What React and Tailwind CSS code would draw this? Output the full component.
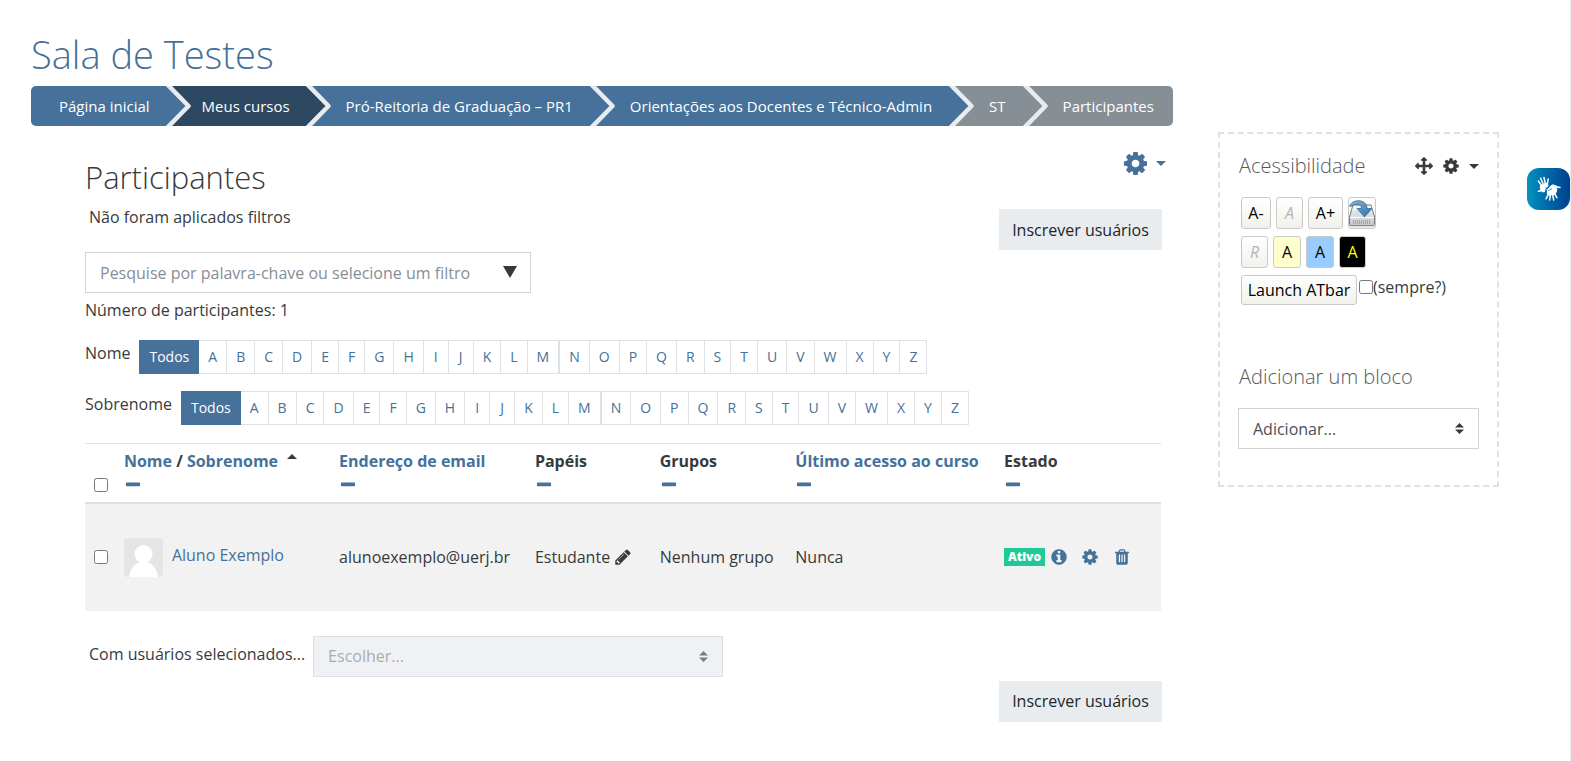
import clsx from 'clsx';

const PATHS = {
  cog: 'M1152 896q0-106-75-181t-181-75-181 75-75 181 75 181 181 75 181-75 75-181zm512-109v222q0 12-8 23t-20 13l-185 28q-19 54-39 91 35 50 107 138 10 12 10 25t-9 23q-27 37-99 108t-94 71q-12 0-26-9l-138-108q-44 23-91 38-16 136-29 186-7 28-36 28h-222q-14 0-24.5-8.5t-11.5-21.5l-28-184q-49-16-90-37l-141 107q-10 9-25 9-14 0-25-11-126-114-165-168-7-10-7-23 0-12 8-23 15-21 51-66.5t54-70.5q-27-50-41-99l-183-27q-13-2-21-12.5t-8-23.5v-222q0-12 8-23t19-13l186-28q14-46 39-92-40-57-107-138-10-12-10-24 0-10 9-23 26-36 98.5-107.5t94.5-71.5q13 0 26 10l138 107q44-23 91-38 16-136 29-186 7-28 36-28h222q14 0 24.5 8.5t11.5 21.5l28 184q49 16 90 37l142-107q9-9 24-9 13 0 25 10 129 119 165 170 7 8 7 22 0 12-8 23-15 21-51 66.5t-54 70.5q26 50 41 98l183 28q13 2 21 12.5t8 23.5z',
  move: 'M1792 896q0 26-19 45l-256 256q-19 19-45 19t-45-19-19-45v-128h-384v384h128q26 0 45 19t19 45-19 45l-256 256q-19 19-45 19t-45-19l-256-256q-19-19-19-45t19-45 45-19h128v-384h-384v128q0 26-19 45t-45 19-45-19l-256-256q-19-19-19-45t19-45l256-256q19-19 45-19t45 19 19 45v128h384v-384h-128q-26 0-45-19t-19-45 19-45l256-256q19-19 45-19t45 19l256 256q19 19 19 45t-19 45-45 19h-128v384h384v-128q0-26 19-45t45-19 45 19l256 256q19 19 19 45z',
  info: 'M1152 1376v-160q0-14-9-23t-23-9h-96v-512q0-14-9-23t-23-9h-320q-14 0-23 9t-9 23v160q0 14 9 23t23 9h96v320h-96q-14 0-23 9t-9 23v160q0 14 9 23t23 9h448q14 0 23-9t9-23zm-128-896v-160q0-14-9-23t-23-9h-192q-14 0-23 9t-9 23v160q0 14 9 23t23 9h192q14 0 23-9t9-23zm640 416q0 209-103 385.5t-279.5 279.5-385.5 103-385.5-103-279.5-279.5-103-385.5 103-385.5 279.5-279.5 385.5-103 385.5 103 279.5 279.5 103 385.5z',
  pencil: 'M491 1536l91-91-235-235-91 91v107h128v128h107zm523-928q0-22-22-22-10 0-17 7l-542 542q-7 7-7 17 0 22 22 22 10 0 17-7l542-542q7-7 7-17zm-54-192l416 416-832 832h-416v-416zm683 96q0 53-37 90l-166 166-416-416 166-165q36-38 90-38 53 0 91 38l235 234q37 39 37 91z',
  trash: 'M704 1376v-704q0-14-9-23t-23-9h-64q-14 0-23 9t-9 23v704q0 14 9 23t23 9h64q14 0 23-9t9-23zm256 0v-704q0-14-9-23t-23-9h-64q-14 0-23 9t-9 23v704q0 14 9 23t23 9h64q14 0 23-9t9-23zm256 0v-704q0-14-9-23t-23-9h-64q-14 0-23 9t-9 23v704q0 14 9 23t23 9h64q14 0 23-9t9-23zm-544-992h448l-48-117q-7-9-17-11h-317q-10 2-17 11zm928 32v64q0 14-9 23t-23 9h-96v948q0 83-47 143.5t-113 60.5h-832q-66 0-113-58.5t-47-141.5v-952h-96q-14 0-23-9t-9-23v-64q0-14 9-23t23-9h309l70-167q15-37 54-63t79-26h320q40 0 79 26t54 63l70 167h309q14 0 23 9t9 23z',
  minus: 'M1600 736v192q0 40-28 68t-68 28h-1216q-40 0-68-28t-28-68v-192q0-40 28-68t68-28h1216q40 0 68 28t28 68z',
};

const CRUMBS = [
  { label: 'Página inicial', bg: 'bg-[#45719a]', fill: '#45719a', pad: 'pl-7 pr-4' },
  { label: 'Meus cursos', bg: 'bg-[#2d4861]', fill: '#2d4861', pad: 'pl-[11px] pr-4' },
  { label: 'Pró-Reitoria de Graduação – PR1', bg: 'bg-[#45719a]', fill: '#45719a', pad: 'pl-[15px] pr-[17px]' },
  { label: 'Orientações aos Docentes e Técnico-Admin', bg: 'bg-[#45719a]', fill: '#45719a', pad: 'pl-[15px] pr-[17px]' },
  { label: 'ST', bg: 'bg-[#868e96]', fill: '#868e96', pad: 'pl-[15px] pr-[17px]' },
  { label: 'Participantes', bg: 'bg-[#868e96]', fill: '#868e96', pad: 'pl-[15px] pr-4' },
];

const LETTER_GROUPS = ['ABCDEFGHIJKLM', 'NOPQRSTUVWXYZ'];

const COLUMNS = [
  { label: 'Endereço de email', link: true },
  { label: 'Papéis' },
  { label: 'Grupos' },
  { label: 'Último acesso ao curso', link: true },
  { label: 'Estado' },
];

function Icon({ name, className }) {
  return (
    <svg viewBox="0 0 1792 1792" fill="currentColor" className={clsx('shrink-0', className)} aria-hidden="true">
      <path d={PATHS[name]} />
    </svg>
  );
}

function Caret({ className }) {
  return (
    <svg viewBox="0 0 10 5" fill="currentColor" className={clsx('h-[5px] w-[10px] shrink-0', className)} aria-hidden="true">
      <path d="M0 0h10L5 5z" />
    </svg>
  );
}

function Breadcrumb() {
  return (
    <nav aria-label="Navegação">
      <ol className="flex h-10 overflow-hidden rounded-[5px] text-[15px] text-white">
        {CRUMBS.map((crumb, i) => (
          <li key={crumb.label} className={clsx('flex', i === CRUMBS.length - 1 && 'flex-1')}>
            <a href="#" className={clsx('flex flex-1 items-center whitespace-nowrap', crumb.bg, crumb.pad)}>
              {crumb.label}
            </a>
            {i < CRUMBS.length - 1 && (
              <svg viewBox="0 0 25 40" className="h-10 w-[25px] shrink-0" aria-hidden="true">
                <rect width="25" height="40" fill={CRUMBS[i + 1].fill} />
                <path d="M0 0h2l20 20L2 40H0z" fill={crumb.fill} />
                <path d="M1 -2L22.500 20L1 42" fill="none" stroke="#e9ecef" strokeWidth="4.500" strokeLinejoin="round" />
              </svg>
            )}
          </li>
        ))}
      </ol>
    </nav>
  );
}

function InitialsBar({ label }) {
  const cell = 'flex h-full min-w-[25px] items-center justify-center border-y border-r border-[#dee2e6] px-[9px] text-[#45719a]';
  return (
    <div className="flex gap-[9px]">
      <span className="leading-[26px]">{label}</span>
      <nav aria-label={label} className="flex h-[34px] text-sm">
        <a href="#" className="flex items-center bg-[#45719a] px-[10px] font-medium text-white">Todos</a>
        {LETTER_GROUPS.map((group, i) => (
          <ul key={group} className={clsx('flex', i > 0 && 'border-l border-[#dee2e6]')}>
            {group.split('').map((letter) => (
              <li key={letter}>
                <a href="#" className={cell}>{letter}</a>
              </li>
            ))}
          </ul>
        ))}
      </nav>
    </div>
  );
}

function SelectBox({ label, id, disabled, className }) {
  return (
    <div className={clsx('relative', className)}>
      <select
        id={id}
        aria-label={label}
        disabled={disabled}
        className={clsx(
          'h-[41px] w-full appearance-none border px-[14px]',
          disabled ? 'border-[#dcdfe5] bg-[#f0f1f4] text-[#a9adb3] opacity-100' : 'border-[#ced4da] bg-white text-[#495057]'
        )}
      >
        <option>{label}</option>
      </select>
      <svg
        viewBox="0 0 9 11"
        className={clsx('pointer-events-none absolute right-[15px] top-[15px] h-[11px] w-[9px]', disabled ? 'text-[#7b7d80]' : 'text-[#373a3c]')}
        fill="currentColor"
        aria-hidden="true"
      >
        <path d="M0 4.500L4.500 0L9 4.500zM0 6.500h9L4.500 11z" />
      </svg>
    </div>
  );
}

function EnrolButton() {
  return (
    <button type="button" className="mr-1 h-[41px] w-[163px] whitespace-nowrap bg-[#e9ecef] text-[#212529]">
      Inscrever usuários
    </button>
  );
}

function CollapseColumn() {
  return (
    <button type="button" aria-label="Ocultar coluna" className="block h-6 text-[#45719a]">
      <Icon name="minus" className="h-[18px] w-[18px]" />
    </button>
  );
}

function Avatar() {
  return (
    <svg viewBox="0 0 39 39" className="h-[39px] w-[39px] shrink-0 rounded" aria-hidden="true">
      <rect width="39" height="39" fill="#e5e5e5" />
      <circle cx="19.500" cy="16" r="9" fill="#fff" />
      <path d="M5 39c1-9 7-15.500 14.500-15.500S33 30 34 39z" fill="#fff" />
    </svg>
  );
}

function ParticipantsTable() {
  return (
    <table className="w-[calc(100%-5px)] table-fixed border-collapse text-left">
      <colgroup>
        <col className="w-[2.500%]" />
        <col className="w-[20%]" />
        <col className="w-[18.200%]" />
        <col className="w-[11.600%]" />
        <col className="w-[12.600%]" />
        <col className="w-[19.400%]" />
        <col />
      </colgroup>
      <thead>
        <tr className="h-[59px] border-b-2 border-t border-b-[#dee2e6] border-t-[#dee2e6] align-top">
          <th className="pl-[9px] pt-[34px]">
            <input type="checkbox" aria-label="Selecionar todos" className="block h-[14px] w-[14px]" />
          </th>
          <th className="whitespace-nowrap pl-3 pt-[5px] font-bold leading-6">
            <a href="#" className="text-[#45719a]">Nome</a> / <a href="#" className="text-[#45719a]">Sobrenome</a>
            <Caret className="mb-3 ml-[9px] inline rotate-180" />
            <CollapseColumn />
          </th>
          {COLUMNS.map((column) => (
            <th key={column.label} className="whitespace-nowrap pl-3 pt-[5px] font-bold leading-6">
              {column.link ? <a href="#" className="text-[#45719a]">{column.label}</a> : column.label}
              <CollapseColumn />
            </th>
          ))}
        </tr>
      </thead>
      <tbody>
        <tr className="h-[108px] whitespace-nowrap bg-[#f2f2f2]">
          <td className="pl-[9px]">
            <input type="checkbox" aria-label="Selecionar Aluno Exemplo" className="block h-[14px] w-[14px]" />
          </td>
          <td className="pl-3">
            <a href="#" className="flex items-center gap-[9px] text-[#45719a]">
              <Avatar />
              <span className="pb-1">Aluno Exemplo</span>
            </a>
          </td>
          <td className="pl-3">alunoexemplo@uerj.br</td>
          <td className="pl-3">
            <span className="flex items-center gap-1">
              Estudante
              <button type="button" aria-label="Editar papéis">
                <Icon name="pencil" className="h-[18px] w-[18px]" />
              </button>
            </span>
          </td>
          <td className="pl-3">Nenhum grupo</td>
          <td className="pl-3">Nunca</td>
          <td className="pl-3">
            <span className="flex items-center text-[#45719a]">
              <span className="mr-[5px] flex h-[18px] w-[41px] items-center justify-center bg-[#20c997] text-xs font-extrabold text-white">Ativo</span>
              <a href="#" aria-label="Informações" className="mr-[13px]"><Icon name="info" className="h-[18px] w-[18px]" /></a>
              <a href="#" aria-label="Editar inscrição" className="mr-[14px]"><Icon name="cog" className="h-[18px] w-[18px]" /></a>
              <a href="#" aria-label="Cancelar inscrição"><Icon name="trash" className="h-[18px] w-[18px]" /></a>
            </span>
          </td>
        </tr>
      </tbody>
    </table>
  );
}

function SaveIcon() {
  return (
    <svg viewBox="0 0 28 28" className="h-7 w-7 shrink-0" aria-hidden="true">
      <defs>
        <linearGradient id="drive" x1="0" y1="0" x2="0" y2="1">
          <stop offset="0" stopColor="#fafafa" />
          <stop offset="1" stopColor="#c4c6c8" />
        </linearGradient>
        <linearGradient id="arrow" x1="0" y1="0" x2="1" y2="1">
          <stop offset="0" stopColor="#8cb6d6" />
          <stop offset="1" stopColor="#2f6ea6" />
        </linearGradient>
      </defs>
      <path d="M5 6h18l3.500 12v7.500a1.200 1.200 0 0 1-1.200 1.200H2.700a1.200 1.200 0 0 1-1.200-1.200V18z" fill="url(#drive)" stroke="#777a7d" />
      <path d="M2 18.500h24" stroke="#fff" />
      <ellipse cx="14" cy="15" rx="9" ry="3.500" fill="#dcddde" />
      <path d="M5.500 21v4M7.500 21v4M9.500 21v4M11.500 21v4M13.500 21v4M15.500 21v4M17.500 21v4M19.500 21v4M21.500 21v4" stroke="#a2a5a8" />
      <path d="M1.500 7C3.500 2.500 8.500 1 13 2c4 1 6 4 6 7.500h5L16.500 18 9 9.500h4.500C13.500 7 12 5.500 9 5.500c-2.500 0-4.500.5-6 2z" fill="url(#arrow)" stroke="#356f9e" strokeWidth=".8" />
    </svg>
  );
}

function ToolButton({ className, children, ...props }) {
  return (
    <button
      type="button"
      className={clsx('flex items-center justify-center rounded-[3px] border border-[#c9c9c9] text-black', className)}
      {...props}
    >
      {children}
    </button>
  );
}

function AccessibilityBlock() {
  const plain = 'bg-linear-to-b from-white to-[#f1f2ea]';
  return (
    <section>
      <div className="flex items-center justify-between">
        <h3 className="pl-[1px] text-xl font-light leading-6 text-[#55595c]">Acessibilidade</h3>
        <div className="flex items-center">
          <button type="button" aria-label="Mover bloco"><Icon name="move" className="h-[18px] w-[18px]" /></button>
          <button type="button" aria-label="Ações do bloco" className="ml-[9px] flex items-center gap-[9px]">
            <Icon name="cog" className="h-[18px] w-[18px]" />
            <Caret />
          </button>
        </div>
      </div>
      <div className="mt-[19px] flex flex-col gap-[7px] pl-[3px]">
        <div className="flex h-8 gap-[5px]">
          <ToolButton className={clsx('w-[30px]', plain)}>A-</ToolButton>
          <ToolButton className={clsx('w-[27px] italic text-[#b5b5b5]!', plain)}>A</ToolButton>
          <ToolButton className={clsx('w-[35px]', plain)}>A+</ToolButton>
          <ToolButton className={clsx('w-7', plain)} aria-label="Salvar configurações"><SaveIcon /></ToolButton>
        </div>
        <div className="flex h-8 gap-[5px]">
          <ToolButton className={clsx('w-[27px] italic text-[#b5b5b5]!', plain)}>R</ToolButton>
          <ToolButton className="w-7 bg-[#ffffcc]">A</ToolButton>
          <ToolButton className="w-7 bg-[#99ccff]">A</ToolButton>
          <ToolButton className="w-[27px] bg-black text-[#ffff00]!">A</ToolButton>
        </div>
        <div className="flex h-[30px] gap-[2px]">
          <ToolButton className={clsx('w-[116px] whitespace-nowrap', plain)}>Launch ATbar</ToolButton>
          <label className="flex h-6 items-center">
            <input type="checkbox" className="h-[14px] w-[14px]" />
            (sempre?)
          </label>
        </div>
      </div>
    </section>
  );
}

function SignLanguageWidget() {
  return (
    <button
      type="button"
      aria-label="Conteúdo acessível em Libras"
      className="fixed right-[1px] top-[168px] flex h-[42px] w-[43px] items-center justify-center rounded-xl bg-linear-to-r from-[#0691bd] to-[#003f8f]"
    >
      <svg viewBox="0 0 26 26" className="h-[26px] w-[26px]" fill="none" stroke="#fff" strokeWidth="1.500" strokeLinecap="round" aria-hidden="true">
        <path d="M5.500 9.500L2.300 5M7.200 8L4.600 2.200M9.300 7.500L8 1.500M11.300 8.500l.9-5.500M6 14.500l-3.500.8" />
        <path d="M4.800 9.500l6-2.500 1.400 2.500-3 2.800-.5 3.200-2.200.5-2-3z" fill="#fff" stroke="#fff" strokeWidth="1" strokeLinejoin="round" />
        <path d="M12.200 18.500L10 22.800M14.300 19l-.6 5M16.700 19l1 5M18.800 17.800l2.200 4M19.500 10.500l4.500 1" />
        <path d="M10.800 13l3.200-3 3.200-1.200 3.800 1.700-.5 5-1.700 3-6 .8-1.600-2z" fill="#fff" stroke="#fff" strokeWidth="1" strokeLinejoin="round" />
        <path d="M10.600 16.500l-.2-2.800 4.200-4.400" stroke="#0569a7" strokeWidth="1" />
        <path d="M12.500 14.500l3-1.700" stroke="#0569a7" strokeWidth=".8" />
      </svg>
    </button>
  );
}

export default function App() {
  return (
    <div className="min-h-screen border-r border-[#e9ecef] bg-white pb-8 pl-[31px] pr-[71px] pt-8 font-['Open_Sans','Noto_Sans',sans-serif] text-base leading-6 text-[#373a3c]">
      <div className="flex gap-[45px]">
        <main className="min-w-0 flex-1">
          <h1 className="text-[38px] font-light leading-[44px] text-[#45719a]">
            <a href="#">Sala de Testes</a>
          </h1>
          <div className="mt-[10px]">
            <Breadcrumb />
          </div>

          <div className="pl-[54px] pr-[7px] pt-6">
            <div className="flex justify-between">
              <div>
                <h2 className="mt-[9px] text-[31px] font-light leading-[36px]">Participantes</h2>
                <p className="mt-[10px] pl-1">Não foram aplicados filtros</p>
                <div className="relative mt-[23px] w-[446px]">
                  <input
                    type="text"
                    aria-label="Filtros"
                    placeholder="Pesquise por palavra-chave ou selecione um filtro"
                    className="h-[41px] w-full border border-[#ced4da] pl-[14px] pr-10 placeholder:text-[#868e96]"
                  />
                  <button type="button" aria-label="Abrir filtros" className="absolute right-[14px] top-[14px]">
                    <svg viewBox="0 0 14 12" className="block h-3 w-[14px]" fill="currentColor" aria-hidden="true">
                      <path d="M0 0h14L7 12z" />
                    </svg>
                  </button>
                </div>
              </div>
              <div className="flex flex-col items-end">
                <button type="button" aria-label="Ações" className="flex items-center gap-[7px] text-[#45719a]">
                  <Icon name="cog" className="h-[27px] w-[27px]" />
                  <Caret />
                </button>
                <div className="mt-8">
                  <EnrolButton />
                </div>
              </div>
            </div>

            <p className="mt-[5px]">Número de participantes: 1</p>
            <div className="mt-[18px] flex flex-col gap-[17px]">
              <InitialsBar label="Nome" />
              <InitialsBar label="Sobrenome" />
            </div>

            <div className="mt-[18px]">
              <ParticipantsTable />
            </div>

            <div className="mt-[25px] flex gap-2 pl-1">
              <label htmlFor="bulk" className="whitespace-nowrap leading-9">Com usuários selecionados...</label>
              <SelectBox id="bulk" label="Escolher..." disabled className="w-[410px]" />
            </div>
            <div className="mt-1 flex justify-end">
              <EnrolButton />
            </div>
          </div>
        </main>

        <aside className="mt-[100px] h-[355px] w-[281px] shrink-0 border-2 border-dashed border-[#dee2e6] px-[18px] pt-5">
          <AccessibilityBlock />
          <section className="mt-[60px]">
            <h3 className="pl-[1px] text-xl font-light leading-6 text-[#55595c]">Adicionar um bloco</h3>
            <SelectBox id="add-block" label="Adicionar..." className="mt-[19px]" />
          </section>
        </aside>
      </div>
      <SignLanguageWidget />
    </div>
  );
}
